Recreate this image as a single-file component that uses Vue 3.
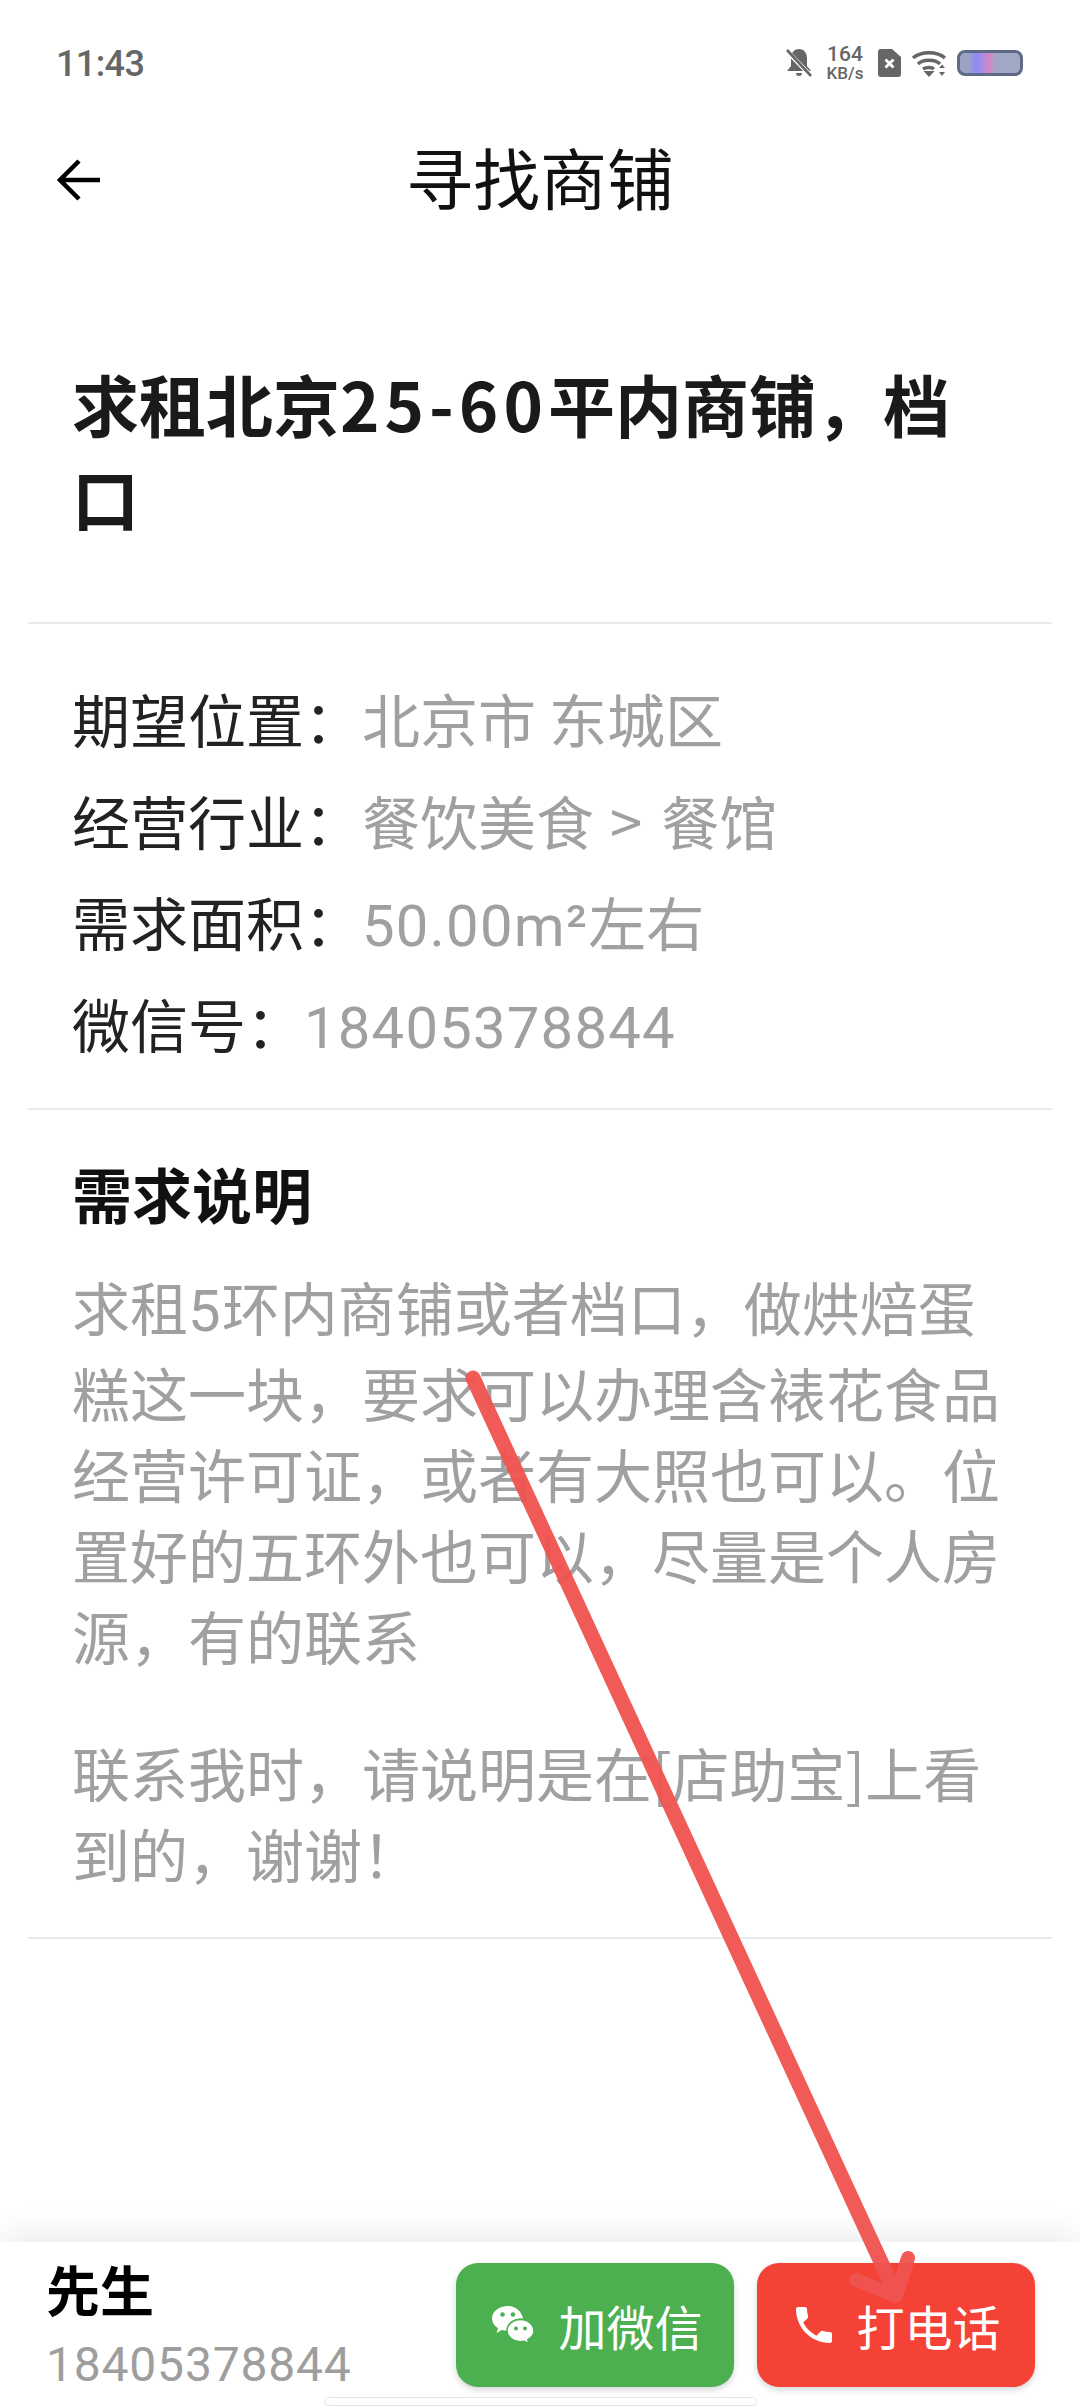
<script setup>
const rows = [
  { label: '期望位置：', parts: [{ t: '北京市 东城区' }] },
  { label: '经营行业：', parts: [{ t: '餐饮美食' }, { t: ' > ', c: 'sep' }, { t: '餐馆' }] },
  { label: '需求面积：', parts: [{ t: '50.00m²', c: 'num' }, { t: '左右' }] },
  { label: '微信号：', parts: [{ t: '18405378844', c: 'num' }] },
]
</script>

<template>
  <div class="page">
    <div class="status">
      <span class="time">11:43</span>
      <div class="status-icons">
        <svg class="bell" viewBox="0 0 26 28" width="26" height="28">
          <path d="M13 0c5 0 8 4 8 9v8l4 5H1l4-5V9c0-5 3-9 8-9z" fill="#666" />
          <path d="M10 24h6a3 3 0 0 1-6 0z" fill="#666" />
          <path d="M1 2l24 25" stroke="#fff" stroke-width="4.500" />
          <path d="M1 1l24 26" stroke="#666" stroke-width="2.6" />
        </svg>
        <div class="speed"><span>164</span><span>KB/s</span></div>
        <svg class="sim" viewBox="0 0 23 28" width="23" height="28">
          <path d="M3 0h11l9 8v17a3 3 0 0 1-3 3H3a3 3 0 0 1-3-3V3a3 3 0 0 1 3-3z" fill="#666" />
          <path d="M7.5 10.5l8 8M15.500 10.500l-8 8" stroke="#fff" stroke-width="2.800" />
        </svg>
        <svg class="wifi" viewBox="0 0 34 28" width="34" height="28">
          <g fill="none" stroke="#666" stroke-width="3.500">
            <path d="M1 9C9 2 25 2 33 9" />
            <path d="M6 15c5-5 17-5 22 0" />
            <path d="M11 20c3-2 9-2 11 0" />
          </g>
          <path d="M11.500 22h11L17 28z" fill="#666" />
          <path d="M27 19l3-3.500 3 3.500zM27 23l3 4 3-4z" fill="#666" />
        </svg>
        <div class="battery"></div>
      </div>
    </div>

    <header class="nav">
      <svg class="back" viewBox="0 0 48 48" width="48" height="48">
        <path d="M45 24H7M24 5L5 24l19 19" fill="none" stroke="#000" stroke-width="4.500" />
      </svg>
      <h1 class="nav-title">寻找商铺</h1>
    </header>

    <h2 class="title">求租北京<span class="title-num">25-60</span>平内商铺，档口</h2>
    <div class="rule"></div>

    <section class="rows">
      <div v-for="row in rows" :key="row.label" class="row">
        <span class="label">{{ row.label }}</span><span class="value"><span v-for="p in row.parts" :key="p.t" :class="p.c">{{ p.t }}</span></span>
      </div>
    </section>
    <div class="rule"></div>

    <section class="desc">
      <h3 class="desc-title">需求说明</h3>
      <p class="desc-text">求租<span class="num">5</span>环内商铺或者档口，做烘焙蛋糕这一块，要求可以办理含裱花食品经营许可证，或者有大照也可以。位置好的五环外也可以，尽量是个人房源，有的联系</p>
      <p class="desc-text note">联系我时，请说明是在[店助宝]上看到的，谢谢！</p>
    </section>
    <div class="rule"></div>

    <div class="spacer"></div>

    <footer class="bar">
      <div class="contact">
        <span class="name">先生</span>
        <span class="phone">18405378844</span>
      </div>
      <div class="actions">
        <button class="btn green">
          <svg viewBox="0 0 42 38" width="42" height="38">
            <path d="M16 0C7 0 0 5.500 0 12.500c0 4 2.300 7.400 6 9.700L4.500 27l5.300-3c1.700.5 3.300.7 5 .8C14 18 20.500 12.500 29 12.500h2C29.500 5 23.500 0 16 0z" fill="#fff" />
            <path d="M28.500 13.500c-7.200 0-13.500 5-13.500 11.200s6.300 11 13.500 11c1.400 0 2.800-.2 4-.5l4.500 2.500-1.200-4c3.700-2 6.200-5 6.200-8.600 0-6.100-6-11.600-13.500-11.600z" fill="#fff" stroke="#4caf50" stroke-width="1.500" />
            <circle cx="10.500" cy="8.500" r="2.300" fill="#4caf50" />
            <circle cx="21" cy="8.500" r="2.300" fill="#4caf50" />
            <circle cx="24" cy="22.500" r="2" fill="#4caf50" />
            <circle cx="33" cy="22.500" r="2" fill="#4caf50" />
          </svg>
          <span>加微信</span>
        </button>
        <button class="btn red">
          <svg viewBox="3 3 18 18" width="36" height="36">
            <path d="M6.620 10.790a15.150 15.150 0 0 0 6.590 6.590l2.200-2.200c.27-.27.67-.36 1.020-.24 1.120.37 2.330.57 3.570.57.550 0 1 .45 1 1V20c0 .55-.45 1-1 1C10.610 21 3 13.390 3 4c0-.55.45-1 1-1h3.500c.55 0 1 .45 1 1 0 1.250.2 2.450.57 3.570.11.350.03.740-.25 1.020l-2.200 2.200z" fill="#fff" />
          </svg>
          <span>打电话</span>
        </button>
      </div>
    </footer>
    <div class="pill"></div>

    <svg class="arrow" viewBox="0 0 1080 2408" width="1080" height="2408">
      <g fill="none" stroke="#ef5350" stroke-linecap="round" stroke-linejoin="round" stroke-opacity="0.96">
        <path d="M473 1378L893 2288" stroke-width="15" />
        <path d="M908 2258L896 2296L856 2280" stroke-width="14" />
      </g>
    </svg>
  </div>
</template>

<style scoped>
.page {
  position: relative;
  width: 1080px;
  height: 2408px;
  display: flex;
  flex-direction: column;
  overflow: hidden;
  background: #fff;
  font-family: "Noto Sans CJK SC", "Noto Sans", sans-serif;
}
.status {
  height: 126px;
  flex: none;
  display: flex;
  align-items: center;
  justify-content: space-between;
  padding: 0 56px;
  box-sizing: border-box;
}
.time {
  font-family: Roboto, sans-serif;
  font-size: 36px;
  font-weight: 500;
  letter-spacing: -0.6px;
  color: #666;
  margin-top: 2px;
}
.status-icons {
  display: flex;
  align-items: center;
  height: 40px;
  margin-right: 1px;
}
.bell { margin-right: 14px; }
.speed {
  display: flex;
  flex-direction: column;
  align-items: center;
  width: 38px;
  margin-right: 14px;
  font-family: Roboto, sans-serif;
  font-weight: 500;
  color: #666;
  font-size: 17px;
  line-height: 17px;
}
.speed span:first-child { font-size: 21px; line-height: 21px; }
.sim { margin-right: 11px; }
.wifi { margin-right: 11px; }
.battery {
  width: 66px;
  height: 26px;
  box-sizing: border-box;
  border: 3px solid #5f6a85;
  border-radius: 8px;
  background: linear-gradient(90deg, #9aa4c4 0 14%, #8f8af0 26%, #a08fe8 36%, #d884c8 48%, #a0a8c6 60%, #a0a8c6 100%);
}
.nav {
  height: 108px;
  flex: none;
  position: relative;
  display: flex;
  align-items: center;
  justify-content: center;
}
.back {
  position: absolute;
  left: 55px;
  top: 30px;
}
.nav-title {
  margin: -8px 0 0;
  font-size: 67px;
  font-weight: 400;
  line-height: 100px;
  color: #111;
}
.title {
  margin: 122px 73px 78px 72px;
  font-size: 67px;
  font-weight: 700;
  line-height: 94px;
  color: #1a1a1a;
}
.title-num { letter-spacing: 5px; }
.rule {
  flex: none;
  height: 2px;
  margin: 0 28px;
  background: #e9e9e9;
}
.rows {
  padding: 44px 73px 34px 72px;
}
.row {
  height: 101.500px;
  line-height: 101.500px;
  font-size: 58px;
  white-space: nowrap;
}
.label { color: #222; }
.value { color: #a0a0a0; }
.num {
  font-family: Roboto, "Noto Sans CJK SC", sans-serif;
  letter-spacing: 1.2px;
}
.sep { letter-spacing: 3px; }
.desc {
  padding: 0 73px 0 72px;
}
.desc-title {
  margin: 43px 0 33px;
  font-size: 60px;
  font-weight: 700;
  line-height: 80px;
  color: #111;
}
.desc-text {
  margin: 0;
  font-size: 58px;
  line-height: 81px;
  color: #a0a0a0;
}
.note {
  margin-top: 56px;
  margin-bottom: 43px;
}
.spacer { flex: 1; }
.bar {
  position: relative;
  flex: none;
  height: 166px;
  display: flex;
  align-items: flex-start;
  justify-content: space-between;
  padding: 14px 45px 0 46px;
  box-sizing: border-box;
  background: #fff;
  box-shadow: 0 -10px 30px rgba(0, 0, 0, 0.07);
}
.contact {
  display: flex;
  flex-direction: column;
}
.name {
  font-size: 54px;
  font-weight: 700;
  line-height: 66px;
  color: #000;
}
.phone {
  margin-top: 12px;
  font-family: Roboto, sans-serif;
  font-size: 48px;
  letter-spacing: 0.8px;
  line-height: 62px;
  color: #9e9e9e;
}
.actions {
  display: flex;
  gap: 23px;
  margin-top: 7px;
}
.btn {
  width: 278px;
  height: 124px;
  border: 0;
  border-radius: 22px;
  padding: 0 0 0 5px;
  display: flex;
  align-items: center;
  justify-content: center;
  gap: 24px;
  font-family: inherit;
  font-size: 48px;
  color: #fff;
  box-shadow: 0 3px 6px rgba(0, 0, 0, 0.16);
}
.green { background: #4caf50; }
.red { background: #f44336; }
.pill {
  position: absolute;
  left: 324px;
  bottom: 2px;
  width: 433px;
  height: 9px;
  box-sizing: border-box;
  border: 1px solid #e4e4e4;
  border-radius: 5px;
  background: #fff;
}
.arrow {
  position: absolute;
  left: 0;
  top: 0;
  pointer-events: none;
}
</style>
